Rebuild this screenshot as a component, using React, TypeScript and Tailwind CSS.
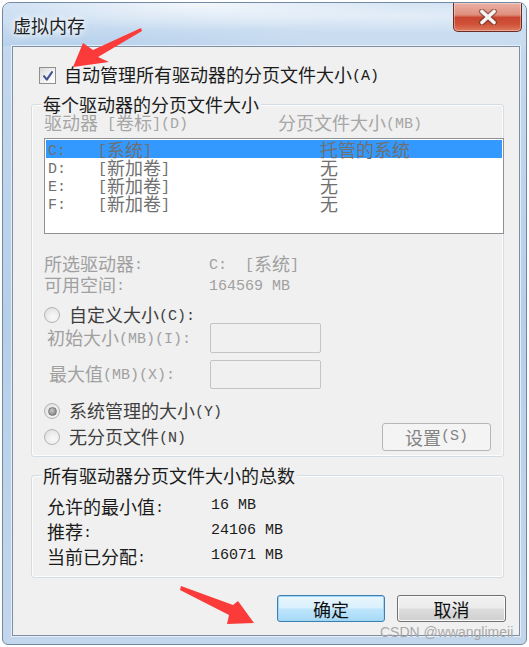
import React from "react";

function M({ children }: { children: React.ReactNode }) {
  return <span className="font-['Liberation_Mono',monospace] text-[15px] whitespace-pre align-[2px]">{children}</span>;
}

function Radio({ checked }: { checked?: boolean }) {
  return (
    <div className="w-[16px] h-[16px] shrink-0 rounded-full border border-[#b4b4b4] bg-[radial-gradient(circle_at_60%_65%,#fafafa_0%,#eeeeee_45%,#d6d6d6_100%)] flex items-center justify-center">
      {checked && (
        <div className="w-[9px] h-[9px] rounded-full border border-[#7a7a7a] bg-[radial-gradient(circle_at_40%_35%,#c8c8c8_0%,#8c8c8c_70%,#777777_100%)]" />
      )}
    </div>
  );
}

function Group({
  label,
  h,
  mt,
  children,
}: {
  label: string;
  h: string;
  mt: string;
  children: React.ReactNode;
}) {
  return (
    <div className={`relative ml-[18px] w-[473px] rounded-[3px] border border-[#d5dde3] shadow-[inset_0_0_0_1px_#fafcfd] ${h} ${mt}`}>
      <div className="absolute left-[9px] top-[-11px] px-[2px] bg-[#f0f0f0] leading-[20px] text-[#1b1b1b] whitespace-nowrap">
        {label}
      </div>
      {children}
    </div>
  );
}

export default function App() {
  return (
    <div className="relative w-[529px] h-[647px] overflow-hidden bg-white p-[2px] font-['Noto_Sans_CJK_SC',sans-serif] text-[18px] leading-[20px] text-[#1b1b1b]">
      <div className="w-[525px] h-[643px] rounded-t-[8px] rounded-b-[6px] border border-[#7389a3] bg-[linear-gradient(180deg,#d2e2f3_0%,#c3d8ee_8%,#b6cfe9_50%,#c2d7ec_100%)] flex flex-col overflow-hidden">
        {/* title bar */}
        <div className="h-[43px] shrink-0 flex items-start justify-between bg-[radial-gradient(ellipse_at_38%_0%,rgba(255,255,255,0.75)_0%,rgba(255,255,255,0)_45%),radial-gradient(ellipse_at_75%_30%,rgba(255,255,255,0.45)_0%,rgba(255,255,255,0)_40%),radial-gradient(ellipse_at_10%_100%,rgba(170,200,232,0.6)_0%,rgba(170,200,232,0)_40%),linear-gradient(180deg,#d0e1f3_0%,#c8dcf0_100%)]">
          <div className="pl-[10px] pt-[12px] text-[18px] leading-[20px] text-[#1e1e1e] [text-shadow:0_0_6px_#ffffff,0_0_10px_#ffffff]">
            虚拟内存
          </div>
          <div className="mr-[4px] w-[69px] h-[29px] rounded-b-[5px] border border-t-0 border-[#6d2b22] bg-[linear-gradient(180deg,#eab0a4_0%,#df8f7d_42%,#c9452f_52%,#cf5138_75%,#e07a5d_100%)] shadow-[inset_0_0_0_1px_rgba(255,255,255,0.35)] flex items-center justify-center">
            <svg width="22" height="16" viewBox="0 0 22 16">
              <path d="M5 2.5 L17 13.5 M17 2.5 L5 13.5" stroke="#5a2a22" strokeWidth="6" strokeLinecap="round" opacity="0.55" />
              <path d="M5 2.5 L17 13.5 M17 2.5 L5 13.5" stroke="#f4f4f4" strokeWidth="3.6" strokeLinecap="round" />
            </svg>
          </div>
        </div>

        {/* client area */}
        <div className="ml-[9px] w-[508px] h-[590px] shrink-0 border border-[#7d8ea2] bg-[#f0f0f0] shadow-[0_0_0_1px_#e6eff8] flex flex-col">
          {/* checkbox row */}
          <div className="mt-[19px] h-[19px] pl-[26px] flex items-center">
            <div className="w-[17px] h-[17px] shrink-0 border border-[#8e8f8f] bg-[linear-gradient(135deg,#d8d8d8_0%,#f4f4f4_60%,#ffffff_100%)] flex items-center justify-center">
              <svg width="14" height="14" viewBox="0 0 14 14">
                <path d="M3 7.2 L5.8 10.6 L11 3.2" fill="none" stroke="#3f5395" strokeWidth="2.1" strokeLinecap="round" strokeLinejoin="round" />
              </svg>
            </div>
            <div className="ml-[8px] whitespace-nowrap">
              自动管理所有驱动器的分页文件大小<M>(A)</M>
            </div>
          </div>

          {/* group 1 */}
          <Group label="每个驱动器的分页文件大小" h="h-[353px]" mt="mt-[19px]">
            <div className="flex flex-col">
              <div className="mt-[7px] h-[20px] flex text-[#a6a6a6] whitespace-nowrap">
                <div className="w-[246px] pl-[12px]">
                  驱动器<M> [</M>卷标<M>](D)</M>
                </div>
                <div>
                  分页文件大小<M>(MB)</M>
                </div>
              </div>
              <div className="ml-[12px] mt-[6px] w-[460px] h-[96px] border border-[#8d9196] bg-white p-[1px] text-[#707070] leading-[18px]">
                {[
                  ["C:", "系统", "托管的系统", true],
                  ["D:", "新加卷", "无", false],
                  ["E:", "新加卷", "无", false],
                  ["F:", "新加卷", "无", false],
                ].map(([d, v, s, sel]) => (
                  <div
                    key={d as string}
                    className={`h-[18px] flex whitespace-nowrap ${sel ? "bg-[#3399ff]" : ""}`}
                  >
                    <div className="w-[52px] pl-[2px]">
                      <M>{d as string}</M>
                    </div>
                    <div className="w-[222px]">
                      <M>[</M>
                      {v as string}
                      <M>]</M>
                    </div>
                    <div>{s as string}</div>
                  </div>
                ))}
              </div>

              <div className="mt-[19px] h-[20px] flex text-[#a0a0a0] whitespace-nowrap">
                <div className="w-[177px] pl-[12px]">
                  所选驱动器<M>:</M>
                </div>
                <div>
                  <M>C:  [</M>系统<M>]</M>
                </div>
              </div>
              <div className="mt-[1px] h-[20px] flex text-[#a0a0a0] whitespace-nowrap">
                <div className="w-[177px] pl-[12px]">
                  可用空间<M>:</M>
                </div>
                <div>
                  <M>164569 MB</M>
                </div>
              </div>

              <div className="mt-[13px] h-[16px] pl-[12px] flex items-center text-[#3e3e3e] whitespace-nowrap">
                <Radio />
                <div className="ml-[9px]">
                  自定义大小<M>(C):</M>
                </div>
              </div>
              <div className="h-[30px] flex items-center text-[#a0a0a0] whitespace-nowrap">
                <div className="w-[178px] pl-[15px]">
                  初始大小<M>(MB)(I):</M>
                </div>
                <div className="w-[111px] h-[30px] rounded-[2px] border border-[#c4c4c4] bg-[#f0f0f0]" />
              </div>
              <div className="mt-[7px] h-[29px] flex items-center text-[#a0a0a0] whitespace-nowrap">
                <div className="w-[178px] pl-[17px]">
                  最大值<M>(MB)(X):</M>
                </div>
                <div className="w-[111px] h-[29px] rounded-[2px] border border-[#c4c4c4] bg-[#f0f0f0]" />
              </div>

              <div className="mt-[14px] h-[16px] pl-[12px] flex items-center text-[#3e3e3e] whitespace-nowrap">
                <Radio checked />
                <div className="ml-[9px]">
                  系统管理的大小<M>(Y)</M>
                </div>
              </div>
              <div className="mt-[4px] h-[28px] pl-[12px] flex items-center text-[#3e3e3e] whitespace-nowrap">
                <Radio />
                <div className="ml-[9px]">
                  无分页文件<M>(N)</M>
                </div>
                <div className="ml-auto mr-[12px] w-[109px] h-[28px] rounded-[3px] border border-[#b3b7ba] bg-[#f4f4f4] flex items-center justify-center text-[#838383]">
                  设置<M>(S)</M>
                </div>
              </div>
            </div>
          </Group>

          {/* group 2 */}
          <Group label="所有驱动器分页文件大小的总数" h="h-[103px]" mt="mt-[18px]">
            <div className="pt-[20px] flex flex-col gap-[5px] whitespace-nowrap">
              <div className="h-[20px] flex">
                <div className="w-[179px] pl-[15px]">
                  允许的最小值<M>:</M>
                </div>
                <M>16 MB</M>
              </div>
              <div className="h-[20px] flex">
                <div className="w-[179px] pl-[15px]">
                  推荐<M>:</M>
                </div>
                <M>24106 MB</M>
              </div>
              <div className="h-[20px] flex">
                <div className="w-[179px] pl-[15px]">
                  当前已分配<M>:</M>
                </div>
                <M>16071 MB</M>
              </div>
            </div>
          </Group>

          {/* buttons */}
          <div className="mt-[17px] pl-[264px] flex gap-[12px]">
            <div className="w-[108px] h-[27px] rounded-[3px] border border-[#3c7fb1] bg-[linear-gradient(180deg,#eaf6fd_0%,#d9f0fc_48%,#bee6fd_52%,#a7d9f5_100%)] shadow-[inset_0_0_0_1px_#9fd6f5] flex items-center justify-center text-[#111111]">
              确定
            </div>
            <div className="w-[109px] h-[27px] rounded-[3px] border border-[#707070] bg-[linear-gradient(180deg,#f2f2f2_0%,#ebebeb_48%,#dddddd_52%,#cfcfcf_100%)] shadow-[inset_0_0_0_1px_#fbfbfb] flex items-center justify-center text-[#111111]">
              取消
            </div>
          </div>
        </div>
      </div>

      {/* watermark */}
      <div className="absolute left-[380px] top-[625px] font-['Liberation_Sans',sans-serif] text-[14px] leading-[14px] text-[#a9a9a9] whitespace-nowrap">
        CSDN @wwanglimeii
      </div>

      {/* red arrows */}
      <svg className="absolute left-0 top-0 pointer-events-none" width="529" height="647" viewBox="0 0 529 647">
        <polygon
          points="141,28 142,31 98,57 109,62 73,67 83,43 93,50"
          fill="#fb3a3a"
        />
        <polygon
          points="181,586 233,605 238,601 254,623 227,624 229,615 180,590"
          fill="#fb3a3a"
        />
      </svg>
    </div>
  );
}
